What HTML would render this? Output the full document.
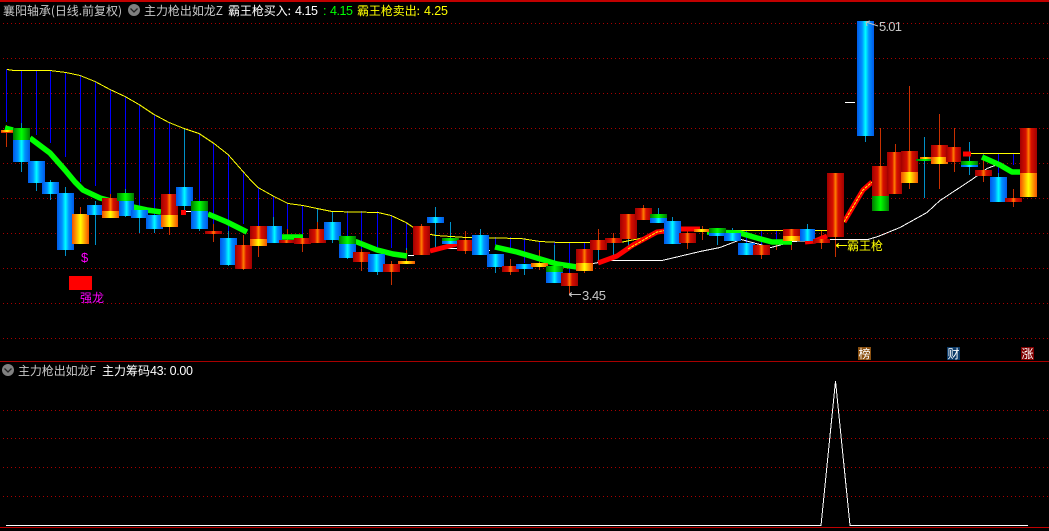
<!DOCTYPE html>
<html><head><meta charset="utf-8"><style>
html,body{margin:0;padding:0;background:#000;width:1049px;height:531px;overflow:hidden}
svg{display:block}
text{font-family:"Liberation Sans","WenQuanYi Zen Hei","Noto Sans CJK SC",sans-serif;font-size:12.5px}
.c{font-family:"WenQuanYi Zen Hei","Noto Sans CJK SC",sans-serif;font-size:12px}
</style></head><body>
<svg width="1049" height="531" viewBox="0 0 1049 531" xmlns="http://www.w3.org/2000/svg">
<defs>
<linearGradient id="r"><stop offset="0" stop-color="#a00000"/><stop offset=".35" stop-color="#d81000"/><stop offset=".5" stop-color="#ff8000"/><stop offset=".65" stop-color="#d81000"/><stop offset="1" stop-color="#a00000"/></linearGradient>
<linearGradient id="y"><stop offset="0" stop-color="#f05000"/><stop offset=".25" stop-color="#ffa000"/><stop offset=".5" stop-color="#ffff00"/><stop offset=".75" stop-color="#ffa000"/><stop offset="1" stop-color="#f05000"/></linearGradient>
<linearGradient id="b"><stop offset="0" stop-color="#0058e8"/><stop offset=".3" stop-color="#0090ff"/><stop offset=".5" stop-color="#00ffff"/><stop offset=".7" stop-color="#0090ff"/><stop offset="1" stop-color="#0058e8"/></linearGradient>
<linearGradient id="g"><stop offset="0" stop-color="#007800"/><stop offset=".5" stop-color="#00ff00"/><stop offset="1" stop-color="#007800"/></linearGradient>
</defs>
<rect width="1049" height="531" fill="#000"/>
<g stroke="#a80000" stroke-width="1" stroke-dasharray="1 3" shape-rendering="crispEdges" fill="none">
<path d="M3 23.5H1049M3 58.5H1049M3 93.5H1049M3 128.5H1049M3 163.5H1049M3 198.5H1049M3 233.5H1049M3 268.5H1049M3 303.5H1049M3 338.5H1049M3 410.5H1049M3 438.5H1049M3 467.5H1049M3 496.5H1049"/>
</g>
<rect x="0" y="0" width="1049" height="2" fill="#c00000"/>
<rect x="0" y="361" width="1049" height="1" fill="#a80000"/>
<rect x="0" y="527" width="1049" height="1" fill="#c00000"/>

<!-- blue lines -->
<g stroke="#0000ff" stroke-width="1" shape-rendering="crispEdges" fill="none">
<path d="M6.5 69V122M21.5 71V123M36.5 70V135M50.5 71V143M65.5 72V157M80.5 75V182M95.5 81V186M110.5 89V198M125.5 96V189M139.5 104V210M154.5 114V215M169.5 122V194M199.5 133V201M213.5 143V224M228.5 154V231M243.5 171V224M258.5 187V226M273.5 196V217M287.5 203V230M302.5 205V235M347.5 211V236M361.5 211V249M377.5 211V253M391.5 215V248M406.5 223V248M495.5 237V245M510.5 237V248M524.5 238V263M539.5 242V250M554.5 242V266M569.5 242V273M584.5 242V249M732.5 228V233M746.5 230V243M761.5 230V245M776.5 230V241M983.5 153V170M998.5 153V177M1013.5 153V165"/>
</g>
<!-- teal wicks -->
<g stroke="#0090c8" stroke-width="1" shape-rendering="crispEdges" fill="none">
<path d="M21.5 123V172M36.5 183V191M50.5 180V200M65.5 187V256M95.5 201V245M125.5 189V217M139.5 218V233M154.5 229V233M184.5 128V212M199.5 229V231M228.5 231V266M273.5 217V226M317.5 208V222M332.5 211V243M347.5 258V259M377.5 272V275M406.5 248V261M435.5 207V249M450.5 222V247M480.5 229V235M495.5 267V273M524.5 269V275M554.5 245V266M598.5 250V263M613.5 243V258M628.5 239V249M658.5 208V214M672.5 217V221M717.5 236V245M732.5 228V233M807.5 224V229M865.5 136V142M924.5 137V198M969.5 142V175M998.5 173V177"/>
</g>
<!-- red wicks -->
<g stroke="#c83000" stroke-width="1" shape-rendering="crispEdges" fill="none">
<path d="M6.5 125V147M80.5 207V214M110.5 194V198M169.5 227V235M213.5 224V242M243.5 235V270M258.5 246V257M287.5 229V243M302.5 235V252M317.5 222V229M361.5 249V271M391.5 261V285M406.5 250V261M421.5 224V226M465.5 231V254M510.5 259V275M539.5 250V270M569.5 286V294M584.5 271V273M598.5 229V240M613.5 233V238M643.5 205V208M687.5 228V249M702.5 226V240M761.5 255V259M776.5 241V250M791.5 241V250M821.5 231V249M835.5 237V257M880.5 128V166M895.5 144V194M909.5 86V151M909.5 183V189M939.5 114V189M954.5 128V172M983.5 155V182M1013.5 189V207"/>
</g>

<!-- yellow / white lines -->
<polyline fill="none" stroke="#ffff00" stroke-width="1" shape-rendering="crispEdges" points="7,69.5 14,70.5 50,70.5 66,72.5 80,75.5 95,81.5 110,89.5 125,96.5 139,104.5 154,114.5 169,122.5 184,128.5 199,133.5 214,143.5 228,154.5 243,171.5 251,180.5 258,187.5 274,196.5 288,203.5 303,205.5 317,208.5 332,211.5 378,212.5 391,215.5 406,222.5 412,226.5 421,232.5 436,235.5 466,237.5 521,238.5 540,241.5 560,242.5 620,242.5 640,238.5 660,231.5 680,230.5 827,230.5"/>
<path d="M963 153.5H1020" stroke="#ffff00" stroke-width="1" shape-rendering="crispEdges" fill="none"/>
<polyline fill="none" stroke="#fff" stroke-width="1" shape-rendering="crispEdges" points="593,263.5 610,260.5 662,260.5 700,251.5 720,247.5 733,242.5 741,239.5 771,247.5 793,241.5 827,239.5 868,239.5 878,236.5 900,227.5 927,212.5 940,200.5 972,179.5 987,168.5 995,165.5"/>
<path d="M186 211.5H192M408 255.5H414M443 248.5H458M484 250.5H490M845 102.5H855" stroke="#fff" stroke-width="1" shape-rendering="crispEdges" fill="none"/>

<!-- green band -->
<g fill="none" stroke="#00ff00" stroke-width="5.5" stroke-linejoin="round">
<polyline points="5,128 13,130"/>
<polyline points="30,138 50,153 65,170 75,182 83,190 100,198 133,207 147,210 161,212"/>
<polyline points="208,214 227,222 247,232"/>
<polyline points="282,237 303,237"/>
<polyline points="339,238 357,242 377,250 393,254 407,256"/>
<polyline points="495,247 517,252 537,258 557,264 577,267"/>
<polyline points="707,232 740,233 757,238 772,242 792,242"/>
<polyline points="982,157 1000,165 1012,172 1020,172"/>
</g>
<!-- red band -->
<g fill="none" stroke="#ff0000" stroke-width="5" stroke-linejoin="round">
<polyline points="430,251 453,245 457,244"/>
<polyline points="598,263 617,256 633,245 657,232 680,229 700,229"/>
<polyline points="805,242 815,241 827,236"/>
<polyline points="844,222 857,200 863,190 872,182"/>
<path d="M963 154H971"/>
<path d="M181 212.5H186"/>
</g>
<g fill="none" stroke="#ffff00" stroke-width="1" stroke-dasharray="3 1">
<polyline points="628,249 657,232 672,229"/>
<polyline points="844,222 857,200 863,190 872,182"/>
</g>

<!-- candles -->
<g shape-rendering="crispEdges">
<rect x="1" y="130" width="12" height="2" fill="url(#y)"/>
<rect x="1" y="132" width="12" height="1" fill="#e03000"/>
<rect x="13" y="128" width="17" height="12" fill="url(#g)"/><rect x="13" y="140" width="17" height="22" fill="url(#b)"/>
<rect x="28" y="161" width="17" height="22" fill="url(#b)"/>
<rect x="42" y="182" width="17" height="12" fill="url(#b)"/>
<rect x="57" y="193" width="17" height="57" fill="url(#b)"/>
<rect x="72" y="214" width="17" height="30" fill="url(#y)"/>
<rect x="87" y="205" width="15" height="10" fill="url(#b)"/>
<rect x="102" y="198" width="17" height="13" fill="url(#r)"/><rect x="102" y="211" width="17" height="7" fill="url(#y)"/>
<rect x="117" y="193" width="17" height="8" fill="url(#g)"/><rect x="119" y="201" width="15" height="15" fill="url(#b)"/>
<rect x="131" y="210" width="17" height="8" fill="url(#b)"/>
<rect x="146" y="215" width="17" height="14" fill="url(#b)"/>
<rect x="161" y="194" width="17" height="21" fill="url(#r)"/><rect x="161" y="215" width="17" height="12" fill="url(#y)"/>
<rect x="176" y="187" width="17" height="19" fill="url(#b)"/>
<rect x="191" y="201" width="17" height="10" fill="url(#g)"/><rect x="191" y="211" width="17" height="18" fill="url(#b)"/>
<rect x="205" y="231" width="17" height="3" fill="url(#r)"/>
<rect x="220" y="238" width="17" height="27" fill="url(#b)"/>
<rect x="235" y="245" width="17" height="24" fill="url(#r)"/>
<rect x="250" y="226" width="17" height="13" fill="url(#r)"/><rect x="250" y="239" width="17" height="7" fill="url(#y)"/>
<rect x="267" y="226" width="15" height="17" fill="url(#b)"/>
<rect x="279" y="240" width="15" height="3" fill="url(#r)"/>
<rect x="294" y="238" width="17" height="6" fill="url(#r)"/>
<rect x="309" y="229" width="17" height="14" fill="url(#r)"/>
<rect x="324" y="222" width="17" height="18" fill="url(#b)"/>
<rect x="339" y="236" width="17" height="8" fill="url(#g)"/><rect x="339" y="244" width="17" height="14" fill="url(#b)"/>
<rect x="353" y="252" width="17" height="10" fill="url(#r)"/>
<rect x="368" y="254" width="17" height="18" fill="url(#b)"/>
<rect x="383" y="264" width="17" height="8" fill="url(#r)"/>
<rect x="398" y="261" width="17" height="3" fill="url(#y)"/>
<rect x="413" y="226" width="17" height="29" fill="url(#r)"/>
<rect x="427" y="217" width="17" height="6" fill="url(#b)"/>
<rect x="442" y="238" width="17" height="3" fill="url(#g)"/><rect x="442" y="241" width="17" height="3" fill="url(#b)"/>
<rect x="457" y="240" width="17" height="11" fill="url(#r)"/>
<rect x="472" y="235" width="17" height="20" fill="url(#b)"/>
<rect x="487" y="254" width="17" height="13" fill="url(#b)"/>
<rect x="502" y="266" width="17" height="6" fill="url(#r)"/>
<rect x="516" y="264" width="17" height="5" fill="url(#b)"/>
<rect x="531" y="263" width="17" height="4" fill="url(#y)"/>
<rect x="546" y="266" width="17" height="6" fill="url(#g)"/><rect x="546" y="272" width="17" height="11" fill="url(#b)"/>
<rect x="561" y="273" width="17" height="13" fill="url(#r)"/>
<rect x="576" y="249" width="17" height="14" fill="url(#r)"/><rect x="576" y="263" width="17" height="8" fill="url(#y)"/>
<rect x="590" y="240" width="17" height="10" fill="url(#r)"/>
<rect x="605" y="238" width="17" height="5" fill="url(#r)"/>
<rect x="620" y="214" width="17" height="25" fill="url(#r)"/>
<rect x="635" y="208" width="17" height="12" fill="url(#r)"/>
<rect x="650" y="214" width="17" height="4" fill="url(#g)"/><rect x="650" y="218" width="17" height="5" fill="url(#b)"/>
<rect x="664" y="221" width="17" height="23" fill="url(#b)"/>
<rect x="679" y="233" width="17" height="10" fill="url(#r)"/>
<rect x="694" y="229" width="15" height="3" fill="url(#y)"/>
<rect x="709" y="228" width="17" height="5" fill="url(#g)"/><rect x="709" y="233" width="17" height="3" fill="url(#b)"/>
<rect x="724" y="233" width="17" height="8" fill="url(#b)"/>
<rect x="738" y="243" width="17" height="12" fill="url(#b)"/>
<rect x="753" y="245" width="17" height="10" fill="url(#r)"/>
<rect x="783" y="229" width="17" height="7" fill="url(#r)"/><rect x="783" y="236" width="17" height="5" fill="url(#y)"/>
<rect x="800" y="229" width="15" height="12" fill="url(#b)"/>
<rect x="813" y="239" width="17" height="4" fill="url(#r)"/>
<rect x="827" y="173" width="17" height="64" fill="url(#r)"/>
<rect x="857" y="21" width="17" height="115" fill="url(#b)"/>
<rect x="872" y="166" width="17" height="30" fill="url(#r)"/><rect x="872" y="196" width="17" height="15" fill="url(#g)"/>
<rect x="887" y="152" width="15" height="42" fill="url(#r)"/>
<rect x="901" y="151" width="17" height="21" fill="url(#r)"/><rect x="901" y="172" width="17" height="11" fill="url(#y)"/>
<rect x="920" y="157" width="11" height="2" fill="url(#y)"/><rect x="916" y="159" width="17" height="2" fill="url(#g)"/>
<rect x="931" y="145" width="17" height="12" fill="url(#r)"/><rect x="931" y="157" width="17" height="7" fill="url(#y)"/>
<rect x="946" y="147" width="15" height="15" fill="url(#r)"/>
<rect x="961" y="161" width="17" height="4" fill="url(#g)"/><rect x="961" y="165" width="17" height="2" fill="url(#b)"/>
<rect x="975" y="170" width="17" height="6" fill="url(#r)"/>
<rect x="990" y="177" width="17" height="25" fill="url(#b)"/>
<rect x="1005" y="198" width="17" height="4" fill="url(#r)"/>
<rect x="1020" y="128" width="17" height="45" fill="url(#r)"/><rect x="1020" y="173" width="17" height="24" fill="url(#y)"/>
<rect x="69" y="276" width="23" height="14" fill="#ff0000"/>
</g>

<!-- top header -->
<text class="c" x="3" y="15" fill="#c8c8c8" textLength="119" lengthAdjust="spacing">襄阳轴承(日线.前复权)</text>
<circle cx="134" cy="10" r="6" fill="#808080"/><path d="M130.5 8.5L134 12L137.5 8.5" stroke="#222" stroke-width="1.3" fill="none"/>
<text class="c" x="144" y="15" fill="#c8c8c8" textLength="79" lengthAdjust="spacing">主力枪出如龙Z</text>
<text class="c" x="228" y="15" fill="#fff" textLength="63" lengthAdjust="spacing">霸王枪买入:</text>
<text x="295" y="15" fill="#fff" textLength="23" lengthAdjust="spacing">4.15</text>
<text x="323" y="15" fill="#00ff00">:</text>
<text x="330" y="15" fill="#00ff00" textLength="23" lengthAdjust="spacing">4.15</text>
<text class="c" x="357" y="15" fill="#ffff00" textLength="63" lengthAdjust="spacing">霸王枪卖出:</text>
<text x="424" y="15" fill="#ffff00" textLength="24" lengthAdjust="spacing">4.25</text>

<!-- chart labels -->
<text x="81" y="262" fill="#ff00ff" style="font-size:13px">$</text>
<text class="c" x="80" y="302" fill="#ff00ff" textLength="24">强龙</text>
<path d="M569 294.5H581M569 294.5L572 292.5M569 294.5L572 296.5" stroke="#c0c0c0" fill="none" shape-rendering="crispEdges"/>
<text x="582" y="300" fill="#c8c8c8" textLength="24" lengthAdjust="spacing" style="font-size:13px">3.45</text>
<path d="M866 22L878 26M866 22L870 21M866 22L867 26" stroke="#c0c0c0" fill="none"/>
<text x="879" y="31" fill="#c8c8c8" textLength="23" lengthAdjust="spacing" style="font-size:13px">5.01</text>
<path d="M836 245.5H847M836 245.5L839 243.5M836 245.5L839 247.5" stroke="#ffff00" fill="none" shape-rendering="crispEdges"/>
<text class="c" x="847" y="250" fill="#ffff00" textLength="36">霸王枪</text>

<!-- small badges -->
<rect x="858" y="347" width="13" height="13" fill="#8a5010"/>
<text class="c" x="858.5" y="358" fill="#fff" style="font-size:12px">榜</text>
<rect x="947" y="347" width="13" height="13" fill="#0c3a68"/>
<text class="c" x="947.5" y="358" fill="#fff" style="font-size:12px">财</text>
<rect x="1021" y="347" width="13" height="13" fill="#800000"/>
<text class="c" x="1021.5" y="358" fill="#fff" style="font-size:12px">涨</text>

<!-- lower panel -->
<circle cx="8" cy="370" r="6" fill="#808080"/><path d="M4.5 368.5L8 372L11.5 368.5" stroke="#222" stroke-width="1.3" fill="none"/>
<text class="c" x="18" y="375" fill="#c8c8c8" textLength="78" lengthAdjust="spacing">主力枪出如龙F</text>
<text class="c" x="102" y="375" fill="#fff" textLength="48" lengthAdjust="spacing">主力筹码</text>
<text x="150" y="375" fill="#fff" textLength="43" lengthAdjust="spacing">43: 0.00</text>
<path d="M6 525.5H821L835.5 381L850 525.5H1028" fill="none" stroke="#fff" stroke-width="1" shape-rendering="crispEdges"/>
</svg>
</body></html>
